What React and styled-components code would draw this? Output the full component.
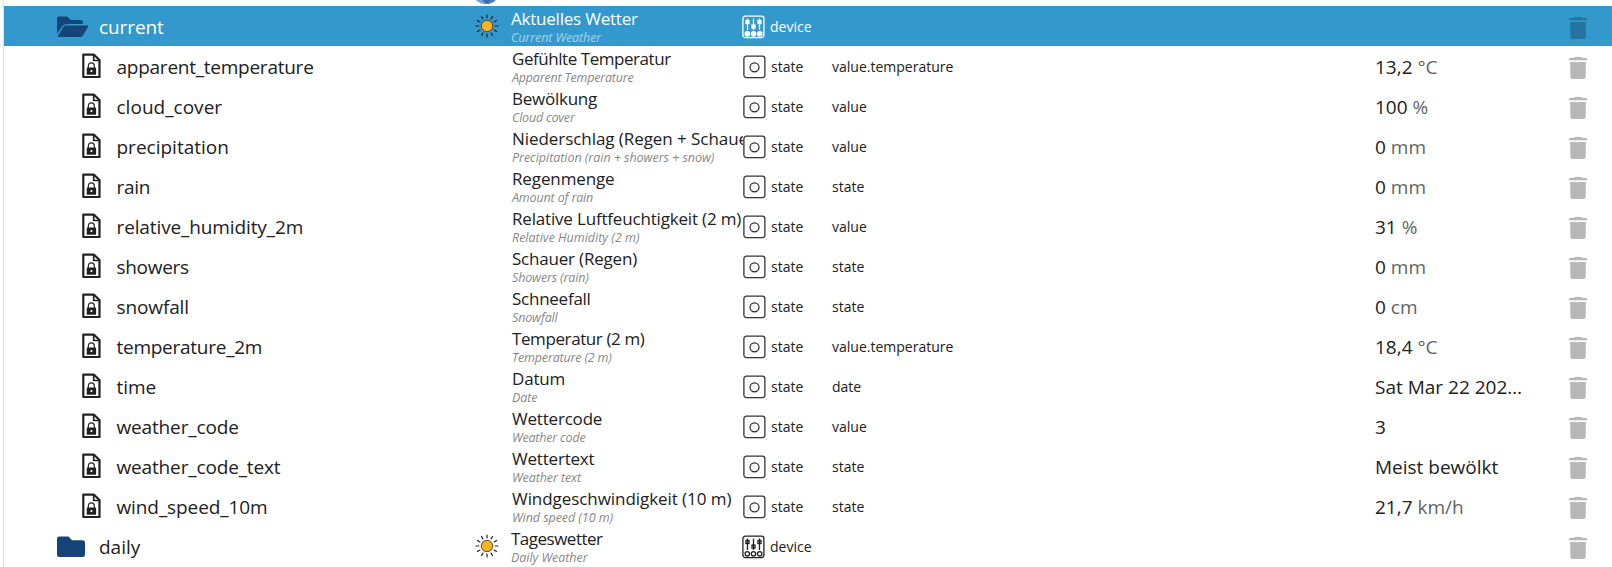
import React from 'react';
import styled, { createGlobalStyle, css } from 'styled-components';

const GlobalStyle = createGlobalStyle`
  * { box-sizing: border-box; }
  body {
    margin: 0;
    overflow: hidden;
    background: #fff;
    color: #212121;
    font-family: "Open Sans", "Noto Sans", sans-serif;
  }
`;

const Panel = styled.main`
  height: 567px;
  margin-left: 3px;
  border-left: 1px solid #e2e2e2;
  overflow: hidden;
`;

const columns = css`
  display: grid;
  grid-template-columns: 467px 40px 232px 89px 543px 190px 1fr;
`;

const PreviousRow = styled.div`
  ${columns}
  height: 6px;
  overflow: hidden;
`;

const Row = styled.div`
  ${columns}
  height: 40px;
  align-items: center;
  background: ${(p) => (p.$selected ? '#3399cc' : 'transparent')};
  color: ${(p) => (p.$selected ? '#fff' : '#212121')};
`;

const IdCell = styled.div`
  display: flex;
  align-items: center;
  padding-top: 2px;
  padding-left: ${(p) => (p.$nested ? 77 : 53)}px;
  font-size: 19px;
  line-height: 38px;
  letter-spacing: ${(p) => p.$spacing || 0}px;
  white-space: nowrap;
`;

const IdIcon = styled.span`
  display: flex;
  width: ${(p) => (p.$nested ? 35.5 : 42)}px;
  padding-bottom: ${(p) => (p.$nested ? 2 : 0)}px;
`;

const RowIcon = styled.div`
  display: flex;
  padding: 0 0 0 4px;
`;

const NameCell = styled.div`
  padding-left: ${(p) => (p.$nested ? 1 : 0)}px;
  height: 40px;
  overflow: hidden;
  white-space: nowrap;
`;

const Title = styled.div`
  margin-top: 2px;
  font-size: 17px;
  line-height: 22px;
  letter-spacing: ${(p) => p.$spacing}px;
`;

const Subtitle = styled.div`
  font-size: 12.5px;
  line-height: 16px;
  font-style: italic;
  opacity: 0.55;
  letter-spacing: ${(p) => p.$spacing}px;
`;

const TypeCell = styled.div`
  display: flex;
  align-items: center;
  gap: 5px;
  padding-top: 2px;
  margin-left: ${(p) => (p.$nested ? 0 : -1)}px;
  font-size: 14px;
  line-height: 20px;
`;

const RoleCell = styled.div`
  padding-top: 2px;
  font-size: 14px;
  line-height: 20px;
`;

const ValueCell = styled.div`
  width: 149px;
  padding-top: 2px;
  overflow: hidden;
  text-overflow: ellipsis;
  white-space: nowrap;
  font-size: 19px;
  line-height: 30px;
`;

const Unit = styled.span`
  opacity: 0.7;
`;

const DeleteCell = styled.div`
  display: flex;
  color: ${(p) => (p.$selected ? '#2473a0' : '#b8b8b8')};
  padding: 4px 0 0 3px;
`;

const FolderOpen = () => (
  <svg width="32" height="22" viewBox="0 0 32 22" fill="#174478">
    <path d="M0 18V2.500Q0 .5 2 .5H10L14 4H23.500Q26 4 26 6.500V8H10Q6.500 8 5 10.500Z" />
    <path d="M.8 20.300 6.300 11Q7.200 9.500 9 9.500H30.500Q31.600 9.500 31 10.700L26.200 19.200Q25.300 21 23.500 21H1.200Q.4 21 .8 20.300Z" />
  </svg>
);

const FolderClosed = () => (
  <svg width="28" height="22" viewBox="0 0 28 22" fill="#174478">
    <path d="M2.500 .5H11.500L15 4.200H25.500Q28 4.200 28 6.700V18.500Q28 21 25.500 21H2.500Q0 21 0 18.500V3Q0 .5 2.500 .5Z" />
  </svg>
);

const LockedFile = () => (
  <svg width="21" height="26" viewBox="0 0 21 26" fill="none" stroke="#212121">
    <path d="M2.300 1.700H13L18.500 7V24H2.300Z" strokeWidth="2.200" strokeLinejoin="round" />
    <path d="M12.700 2V7.500H18.200" strokeWidth="1.700" />
    <path d="M7.300 15V12.900A3 3 0 0 1 13.300 12.900V15" strokeWidth="1.200" />
    <rect x="5.700" y="14.500" width="9.400" height="7.300" rx=".9" fill="#212121" stroke="none" />
    <circle cx="10.400" cy="18.100" r="1.100" fill="#fff" stroke="none" />
  </svg>
);

const Sun = () => (
  <svg width="24" height="24" viewBox="0 0 24 24">
    <g stroke="#222" strokeWidth="1.200" strokeLinecap="round">
      {Array.from({ length: 12 }, (_, i) => (
        <path key={i} d="M12 1V3.800" transform={`rotate(${i * 30} 12 12)`} />
      ))}
    </g>
    <circle cx="12" cy="12" r="5.700" fill="#fbb41f" stroke="#4a3a1c" strokeWidth=".9" />
  </svg>
);

const StateIcon = () => (
  <svg width="23" height="24" viewBox="0 0 23 24" fill="none" stroke="#333" strokeWidth="1.300">
    <rect x=".9" y="1.200" width="21" height="21.400" rx="2.500" />
    <circle cx="11.500" cy="12.300" r="4.500" />
  </svg>
);

const DeviceIcon = ({ filled }) => (
  <svg width="23" height="24" viewBox="0 0 23 24" fill={filled ? 'currentColor' : 'none'} stroke="currentColor" strokeWidth="1.300">
    <rect x=".9" y="1.200" width="21" height="21.400" rx="2.500" fill="none" />
    <path d="M5.500 3.500V15M11.500 3.500V15M17.500 3.500V15" />
    <rect x="4" y="5.500" width="3" height="3" />
    <rect x="10" y="10" width="3" height="3" />
    <rect x="16" y="5.500" width="3" height="3" />
    <circle cx="5.300" cy="18.800" r="2.200" />
    <circle cx="11.500" cy="18.800" r="2.200" />
    <circle cx="17.700" cy="18.800" r="2.200" />
  </svg>
);

const Trash = () => (
  <svg width="20" height="24" viewBox="0 0 20 24" fill="currentColor">
    <path d="M1 2H5.700L6.700 1H13.300L14.300 2H19V4.200H1Z" />
    <path d="M2.300 6H17.800V20.500Q17.800 23 15.300 23H4.800Q2.300 23 2.300 20.500Z" />
  </svg>
);

const GlobeCell = styled.div`
  display: flex;
  align-items: flex-end;
  height: 4px;
  padding-left: 1px;
`;

const Globe = () => (
  <svg width="28" height="28" viewBox="0 0 28 28">
    <circle cx="14" cy="14" r="14" fill="#3f69b5" />
    <path d="M2 21Q8 21 14 28Q6 27 2 21Z" fill="#7da5dc" />
    <path d="M14 28Q19 23 22 22L25 22Q21 28 14 28Z" fill="#4c7cc6" />
  </svg>
);

const rows = [
  { id: 'current', name: 'Aktuelles Wetter', desc: 'Current Weather', device: true, selected: true, tracking: [-0.1, -0.22, -0.1] },
  { id: 'apparent_temperature', name: 'Gefühlte Temperatur', desc: 'Apparent Temperature', role: 'value.temperature', value: '13,2', unit: '°C', tracking: [-0.25, -0.45, -0.2] },
  { id: 'cloud_cover', name: 'Bewölkung', desc: 'Cloud cover', role: 'value', value: '100', unit: '%', tracking: [0.02, -0.25, -0.2] },
  { id: 'precipitation', name: 'Niederschlag (Regen + Schauer + Schnee)', desc: 'Precipitation (rain + showers + snow)', role: 'value', value: '0', unit: 'mm', tracking: [0, -0.06, -0.04] },
  { id: 'rain', name: 'Regenmenge', desc: 'Amount of rain', role: 'state', value: '0', unit: 'mm', tracking: [-0.25, -0.12, -0.15] },
  { id: 'relative_humidity_2m', name: 'Relative Luftfeuchtigkeit (2 m)', desc: 'Relative Humidity (2 m)', role: 'value', value: '31', unit: '%', tracking: [-0.12, -0.18, 0] },
  { id: 'showers', name: 'Schauer (Regen)', desc: 'Showers (rain)', role: 'state', value: '0', unit: 'mm', tracking: [-0.3, -0.2, -0.15] },
  { id: 'snowfall', name: 'Schneefall', desc: 'Snowfall', role: 'state', value: '0', unit: 'cm', tracking: [-0.12, -0.25, -0.15] },
  { id: 'temperature_2m', name: 'Temperatur (2 m)', desc: 'Temperature (2 m)', role: 'value.temperature', value: '18,4', unit: '°C', tracking: [-0.26, -0.4, -0.18] },
  { id: 'time', name: 'Datum', desc: 'Date', role: 'date', value: 'Sat Mar 22 2025 14:00:00', tracking: [-0.05, -0.2, -0.1] },
  { id: 'weather_code', name: 'Wettercode', desc: 'Weather code', role: 'value', value: '3', tracking: [-0.15, -0.2, -0.2] },
  { id: 'weather_code_text', name: 'Wettertext', desc: 'Weather text', role: 'state', value: 'Meist bewölkt', tracking: [-0.15, -0.2, -0.1] },
  { id: 'wind_speed_10m', name: 'Windgeschwindigkeit (10 m)', desc: 'Wind speed (10 m)', role: 'state', value: '21,7', unit: 'km/h', tracking: [-0.1, -0.06, -0.06] },
  { id: 'daily', name: 'Tageswetter', desc: 'Daily Weather', device: true, tracking: [0, -0.5, -0.05] },
];

function ObjectRow({ item }) {
  const nested = !item.device;
  const [idSpacing, nameSpacing, descSpacing] = item.tracking;
  return (
    <Row $selected={item.selected}>
      <IdCell $nested={nested} $spacing={idSpacing}>
        <IdIcon $nested={nested}>
          {nested ? <LockedFile /> : item.selected ? <FolderOpen /> : <FolderClosed />}
        </IdIcon>
        {item.id}
      </IdCell>
      <RowIcon>{item.device && <Sun />}</RowIcon>
      <NameCell $nested={nested}>
        <Title $spacing={nameSpacing}>{item.name}</Title>
        <Subtitle $spacing={descSpacing}>{item.desc}</Subtitle>
      </NameCell>
      <TypeCell $nested={nested}>
        {item.device ? <DeviceIcon filled={item.selected} /> : <StateIcon />}
        {item.device ? 'device' : 'state'}
      </TypeCell>
      <RoleCell>{item.role}</RoleCell>
      <ValueCell>
        {item.value} {item.unit && <Unit>{item.unit}</Unit>}
      </ValueCell>
      <DeleteCell $selected={item.selected}>
        <Trash />
      </DeleteCell>
    </Row>
  );
}

export default function App() {
  return (
    <>
      <GlobalStyle />
      <Panel>
        <PreviousRow>
          <span />
          <GlobeCell>
            <Globe />
          </GlobeCell>
        </PreviousRow>
        {rows.map((item) => (
          <ObjectRow key={item.id} item={item} />
        ))}
      </Panel>
    </>
  );
}
